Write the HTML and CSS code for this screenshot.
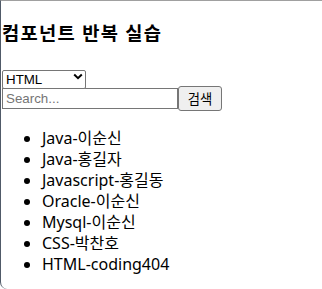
FILE: index.html
```html
<!DOCTYPE html>
<html lang="ko">
<head>
    <meta charset="UTF-8">
    <meta name="viewport" content="width=device-width, initial-scale=1.0">
    <title>컴포넌트 반복 실습</title>
    <link rel="stylesheet" href="styles.css">
</head>
<body>
    <div class="frame">
        <h3 class="title">컴포넌트 반복 실습</h3>
        <div class="select-row">
            <div class="select-wrap">
                <select class="lang-select">
                    <option>HTML</option>
                    <option>CSS</option>
                    <option>Java</option>
                    <option>Javascript</option>
                    <option>Oracle</option>
                    <option>Mysql</option>
                </select>
                <svg class="chevron" width="10" height="7" viewBox="0 0 10 7">
                    <path d="M1.2 1.5 L5 5.2 L8.8 1.5" fill="none" stroke="#000" stroke-width="2"/>
                </svg>
            </div>
        </div>
        <div class="search-row">
            <input type="text" class="search-input" placeholder="Search...">
            <button class="search-button">검색</button>
        </div>
        <ul class="item-list">
            <li>Java-이순신</li>
            <li>Java-홍길자</li>
            <li>Javascript-홍길동</li>
            <li>Oracle-이순신</li>
            <li>Mysql-이순신</li>
            <li>CSS-박찬호</li>
            <li>HTML-coding404</li>
        </ul>
    </div>
</body>
</html>
```

FILE: styles.css
```css
/* Basic reset */
* {
    box-sizing: border-box;
}
body {
    margin: 0;
    background-color: #ffffff;
    color: #000000;
    font-family: "Noto Sans", "Noto Sans CJK KR", sans-serif;
}
/* Window edge around the page */
.frame {
    height: 289px;
    border-top: 1px solid #a0a0a0;
    border-left: 1px solid #505a68;
    border-bottom-left-radius: 7px;
    padding-left: 1px;
    overflow: hidden;
}
/* Heading */
.title {
    margin: 19px 0 22px;
    font-size: 18.72px;
    font-weight: 700;
    line-height: 25px;
    letter-spacing: 1.3px;
}
/* Select */
.select-row {
    height: 19px;
}
.select-wrap {
    position: relative;
    display: inline-block;
}
.lang-select {
    appearance: none;
    width: 84px;
    height: 19px;
    margin: 0;
    padding: 0 0 0 3px;
    border: 1px solid #767676;
    border-radius: 2px;
    background: #ffffff;
    font-family: "Liberation Sans", Arial, sans-serif;
    font-size: 13.33px;
    color: #000000;
}
.chevron {
    position: absolute;
    left: 71px;
    top: 6px;
    pointer-events: none;
}
/* Search */
.search-row {
    display: flex;
    align-items: center;
    height: 25px;
}
.search-input {
    width: 176px;
    height: 21px;
    margin: 0;
    padding: 1px 3px;
    border: 1px solid #767676;
    font-family: "Liberation Sans", Arial, sans-serif;
    font-size: 13.33px;
}
.search-input::placeholder {
    color: #757575;
}
.search-button {
    width: 44px;
    height: 25px;
    margin: 0;
    padding: 0;
    border: 1px solid #767676;
    border-radius: 3px;
    background-color: #efefef;
    font-family: "Noto Sans CJK KR", sans-serif;
    font-size: 13.33px;
    color: #000000;
}
/* List */
.item-list {
    margin: 17px 0 0;
    padding-left: 40px;
    font-size: 16px;
    line-height: 21px;
}
```
